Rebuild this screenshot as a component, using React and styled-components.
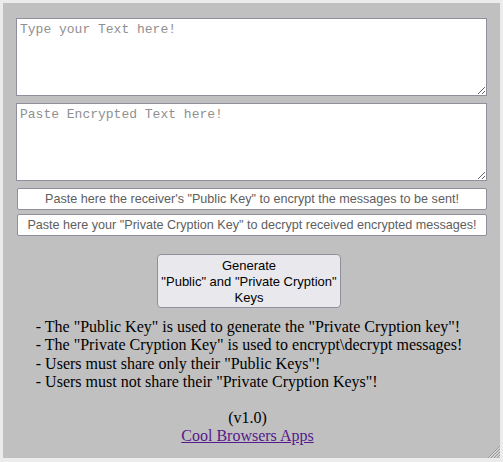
import React from "react";
import styled, { createGlobalStyle } from "styled-components";

const Global = createGlobalStyle`
  html, body { margin: 0; padding: 0; background: #ececec; }
  body { font-family: "Liberation Serif", "Times New Roman", serif; }
`;

const Frame = styled.div`
  position: relative;
  box-sizing: border-box;
  width: 503px;
  height: 462px;
  border: 3px solid #ececec;
  border-bottom-width: 4px;
  background: #c0c0c0;
  padding: 15px 13px 0 13px;
  display: flex;
  flex-direction: column;
`;

const TextBox = styled.textarea`
  box-sizing: border-box;
  width: 100%;
  height: 78px;
  margin: 0 0 7px 0;
  padding: 3px 3px;
  border: 1px solid #8f8f9d;
  border-radius: 0;
  background: #fff;
  font-family: "Liberation Mono", "Courier New", monospace;
  font-size: 13px;
  line-height: 15px;
  color: #000;
  outline: none;
  display: block;
  &::placeholder { color: #8f8f8f; }
`;

const KeyInput = styled.input`
  box-sizing: border-box;
  width: 470px;
  height: 22px;
  margin: 0 0 ${(p) => p.$gap}px 1px;
  padding: 0 2px;
  border: 1px solid #8f8f9d;
  border-radius: 2px;
  background: #fff;
  font-family: "Liberation Sans", Tahoma, sans-serif;
  font-size: 12.6px;
  text-align: center;
  outline: none;
  display: block;
  &::placeholder { color: #5e5e5e; }
`;

const ButtonRow = styled.div`
  display: flex;
  justify-content: center;
  padding-right: 5px;
  margin-top: 18px;
`;

const GenButton = styled.button`
  box-sizing: border-box;
  width: 184px;
  height: 54px;
  padding: 3px 0 1px;
  border: 1px solid #8f8f9d;
  border-radius: 4px;
  background: #e9e9ed;
  color: #000;
  font-family: "Liberation Sans", Tahoma, sans-serif;
  font-size: 13px;
  line-height: 16px;
  text-align: center;
  white-space: nowrap;
`;

const InfoRow = styled.div`
  display: flex;
  justify-content: center;
  padding-right: 5px;
  margin-top: 10px;
`;

const InfoList = styled.div`
  font-size: 16px;
  line-height: 18.4px;
  color: #000;
  text-align: left;
`;

const Footer = styled.div`
  margin-top: 17px;
  padding-right: 8px;
  text-align: center;
  font-size: 16px;
  line-height: 18.4px;
  color: #000;
`;

const Link = styled.a`
  color: #551a8b;
  text-decoration: underline;
`;

const Grip = styled.svg`
  position: absolute;
  right: 0;
  bottom: 0;
  width: 13px;
  height: 13px;
`;

export default function App() {
  return (
    <>
      <Global />
      <Frame>
        <TextBox placeholder="Type your Text here!" />
        <TextBox placeholder="Paste Encrypted Text here!" />
        <KeyInput $gap={4} placeholder={'Paste here the receiver\'s "Public Key" to encrypt the messages to be sent!'} />
        <KeyInput $gap={0} placeholder={'Paste here your "Private Cryption Key" to decrypt received encrypted messages!'} />
        <ButtonRow>
          <GenButton>
            Generate
            <br />
            "Public" and "Private Cryption"
            <br />
            Keys
          </GenButton>
        </ButtonRow>
        <InfoRow>
          <InfoList>
            <div>- The "Public Key" is used to generate the "Private Cryption key"!</div>
            <div>- The "Private Cryption Key" is used to encrypt\decrypt messages!</div>
            <div>- Users must share only their "Public Keys"!</div>
            <div>- Users must not share their "Private Cryption Keys"!</div>
          </InfoList>
        </InfoRow>
        <Footer>
          <div>(v1.0)</div>
          <Link href="#">Cool Browsers Apps</Link>
        </Footer>
        <Grip viewBox="0 0 13 13">
          <g stroke="#9a9a9a" strokeWidth="1">
            <line x1="13" y1="1" x2="1" y2="13" />
            <line x1="13" y1="4" x2="4" y2="13" />
            <line x1="13" y1="7" x2="7" y2="13" />
            <line x1="13" y1="10" x2="10" y2="13" />
          </g>
          <g stroke="#dcdcdc" strokeWidth="1">
            <line x1="13" y1="2" x2="2" y2="13" />
            <line x1="13" y1="5" x2="5" y2="13" />
            <line x1="13" y1="8" x2="8" y2="13" />
            <line x1="13" y1="11" x2="11" y2="13" />
          </g>
        </Grip>
      </Frame>
    </>
  );
}
